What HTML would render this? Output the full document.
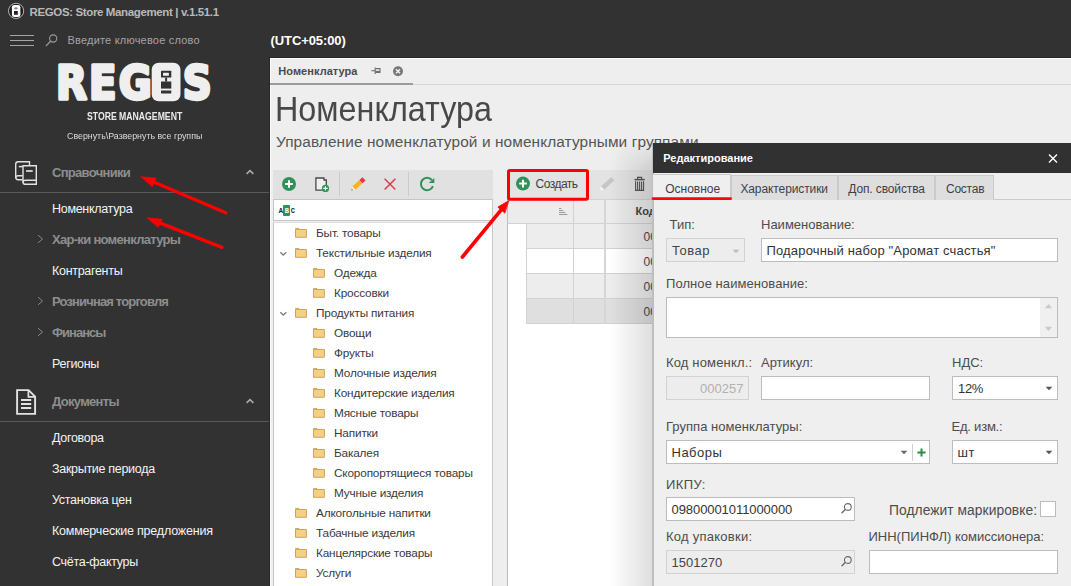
<!DOCTYPE html>
<html lang="ru">
<head>
<meta charset="utf-8">
<title>REGOS: Store Management</title>
<style>
*{box-sizing:border-box;margin:0;padding:0}
html,body{width:1071px;height:586px;overflow:hidden;background:#323232}
body{position:relative;font-family:"Liberation Sans",sans-serif;font-size:12px;color:#333}
.abs{position:absolute;white-space:nowrap}
.t{position:absolute;white-space:nowrap;transform-origin:0 50%;line-height:1}
/* sidebar */
#side{position:absolute;left:0;top:0;width:270px;height:586px;background:#323232}
.mi{position:absolute;left:52px;white-space:nowrap;font-size:12.5px;color:#f4f4f4;line-height:16px;letter-spacing:-.3px}
.mg{position:absolute;left:52px;white-space:nowrap;font-size:13px;font-weight:bold;color:#8e8e8e;line-height:16px;letter-spacing:-.7px}
.sep{position:absolute;left:0;width:270px;height:1px;background:#5a5a5a}
/* main */
#main{position:absolute;left:269px;top:57px;width:802px;height:529px;background:#eeeeee;border-left:1px solid #272727;border-top:1px solid #272727;box-shadow:inset 1px 1px 0 #fbfbfb}
/* tree */
.tr{position:absolute;white-space:nowrap;font-size:11.8px;color:#3a3a3a;line-height:14px;letter-spacing:-.17px}
.fold{position:absolute;width:13px;height:11px}
/* dialog */
#dlg{position:absolute;left:652px;top:143px;width:419px;height:443px;background:#efefef;border-left:2px solid #bebebe}
.lb{position:absolute;white-space:nowrap;font-size:13px;color:#4c4c4c;line-height:16px}
.in{position:absolute;background:#fff;border:1px solid #bcbcbc;font-size:13px;color:#333;line-height:24px;white-space:nowrap;overflow:hidden}
.dis{background:#ededed;border-color:#d2d2d2}
.tab{position:absolute;top:175px;height:25px;background:#dedede;border:1px solid #cacaca;border-bottom:none;font-size:12px;color:#3c3c3c;line-height:24px;text-align:center;white-space:nowrap}
</style>
</head>
<body>
<div id="side">
<!-- title bar -->
<svg class="abs" style="left:7px;top:2px" width="19" height="19" viewBox="0 0 19 19">
<circle cx="9.1" cy="8.9" r="7.6" fill="#1b1b1b" stroke="#c4c4c4" stroke-width=".9"/>
<rect x="4.9" y="2.9" width="8.5" height="12.2" rx="2.4" fill="#fdfdfd"/>
<ellipse cx="8.9" cy="6.4" rx="1.9" ry="1.15" fill="#8a8a8a"/>
<rect x="7" y="9" width="3.8" height="3.9" rx=".6" fill="#1a1a1a"/>
<rect x="7" y="11.6" width="3.8" height="1.5" rx=".5" fill="#6a6a6a" opacity=".6"/>
</svg>
<div class="t" style="left:29.5px;top:7px;font-size:11.5px;font-weight:bold;color:#b9b9b9;letter-spacing:-.37px">REGOS: Store Management | v.1.51.1</div>
<!-- hamburger + search -->
<div class="abs" style="left:10px;top:35px;width:24px;height:1px;background:#a5a5a5"></div>
<div class="abs" style="left:10px;top:40px;width:24px;height:1px;background:#a5a5a5"></div>
<div class="abs" style="left:10px;top:45px;width:24px;height:1px;background:#a5a5a5"></div>
<svg class="abs" style="left:44px;top:32px" width="16" height="16" viewBox="0 0 16 16">
<circle cx="9.2" cy="6.5" r="3.6" fill="none" stroke="#9c9c9c" stroke-width="1.1"/>
<path d="M6.6 9.2 L2.3 13.6" stroke="#9c9c9c" stroke-width="1.3" stroke-linecap="round"/>
</svg>
<div class="t" style="left:67.5px;top:35px;font-size:11px;color:#a4a4a4;letter-spacing:.2px">Введите ключевое слово</div>
<!-- logo -->
<svg class="abs" style="left:50px;top:56px" width="170" height="52" viewBox="50 56 170 52">
<text transform="scale(0.855,1)" y="99" x="65.5 104.1 138.9 183.2 213.9" font-family="'DejaVu Sans','Liberation Sans',sans-serif" font-weight="bold" font-size="47" fill="#efefef" stroke="#efefef" stroke-width="3.4" stroke-linejoin="round">REG<tspan font-size="30" stroke-width="0">O</tspan>S</text>
<rect x="151.7" y="62.8" width="28.8" height="38.4" rx="7" fill="#efefef"/>
<rect x="161" y="70.7" width="10.3" height="6.9" rx=".6" fill="#323232"/>
<rect x="163" y="72.7" width="5.9" height="3.1" rx=".5" fill="#efefef"/>
<rect x="165.1" y="77.6" width="2" height="4" fill="#323232"/>
<rect x="161" y="81.5" width="10.3" height="7.1" fill="#323232"/>
<rect x="161" y="90.4" width="10.3" height="3.1" rx=".4" fill="#323232"/>
</svg>
<div class="t" style="left:86.7px;top:111.5px;font-size:10px;font-weight:bold;color:#ececec;transform:scaleX(.867)">STORE MANAGEMENT</div>
<div class="t" style="left:67px;top:132px;font-size:9px;color:#dcdcdc;transform:scaleX(.982)">Свернуть\Развернуть все группы</div>
<!-- group 1 -->
<svg class="abs" style="left:13px;top:158px" width="28" height="30" viewBox="0 0 28 30">
<g fill="none" stroke="#e2e2e2" stroke-width="1.4">
<path d="M16.5 7.4 V3.8 H5.2 Q2.7 3.8 2.7 6.3 V19.3 Q2.7 21.7 5.2 21.7 H9.6"/>
<path d="M2.7 19.8 Q2.7 17.7 5.2 17.7 H9.6"/>
<path d="M5.8 8.6 H9.6" stroke-width="1.5"/>
<path d="M23.3 7.7 H10 V23.9 Q10 26.3 12.5 26.3 H23.3 Z"/>
<path d="M10 24.4 Q10 22.3 12.5 22.3 H23.3"/>
<path d="M13.1 13 H19.7" stroke-width="1.7"/>
</g>
</svg>
<div class="mg" style="top:165px">Справочники</div>
<svg class="abs" style="left:244px;top:168px" width="12" height="8" viewBox="0 0 12 8"><path d="M2.6 5.9 L6 2.6 L9.4 5.9" fill="none" stroke="#a8a8a8" stroke-width="1.7"/></svg>
<div class="sep" style="top:192px"></div>
<div class="mi" style="top:201px">Номенклатура</div>
<svg class="abs" style="left:36px;top:234px" width="9" height="10" viewBox="0 0 9 10"><path d="M2.1 1.2 L6.5 5 L2.1 8.8" fill="none" stroke="#8e8e8e" stroke-width=".95"/></svg>
<div class="mg" style="top:232px">Хар-ки номенклатуры</div>
<div class="mi" style="top:263px">Контрагенты</div>
<svg class="abs" style="left:36px;top:296px" width="9" height="10" viewBox="0 0 9 10"><path d="M2.1 1.2 L6.5 5 L2.1 8.8" fill="none" stroke="#8e8e8e" stroke-width=".95"/></svg>
<div class="mg" style="top:294px;letter-spacing:-.84px">Розничная торговля</div>
<svg class="abs" style="left:36px;top:327px" width="9" height="10" viewBox="0 0 9 10"><path d="M2.1 1.2 L6.5 5 L2.1 8.8" fill="none" stroke="#8e8e8e" stroke-width=".95"/></svg>
<div class="mg" style="top:325px;letter-spacing:-1px">Финансы</div>
<div class="mi" style="top:356px">Регионы</div>
<!-- group 2 -->
<svg class="abs" style="left:13px;top:386px" width="28" height="30" viewBox="0 0 28 30">
<g fill="none" stroke="#e2e2e2" stroke-width="1.9" stroke-linejoin="miter">
<path d="M4.1 4.1 H15.6 L22.1 10.6 V27.9 H4.1 Z"/>
<path d="M15.4 4.4 V10.8 H21.8" stroke-width="1.7"/>
<path d="M8 14 H18.2 M8 18 H18.2 M8 22 H18.2" stroke-width="1.9"/>
</g>
</svg>
<div class="mg" style="top:394px">Документы</div>
<svg class="abs" style="left:244px;top:397px" width="12" height="8" viewBox="0 0 12 8"><path d="M2.6 5.9 L6 2.6 L9.4 5.9" fill="none" stroke="#a8a8a8" stroke-width="1.7"/></svg>
<div class="sep" style="top:421px"></div>
<div class="mi" style="top:430px">Договора</div>
<div class="mi" style="top:461px">Закрытие периода</div>
<div class="mi" style="top:492px">Установка цен</div>
<div class="mi" style="top:523px;letter-spacing:-.2px">Коммерческие предложения</div>
<div class="mi" style="top:554px">Счёта-фактуры</div>
</div>
<div id="main"></div>
<div class="t" style="left:270.6px;top:33.5px;font-size:13px;font-weight:bold;color:#fff;letter-spacing:-.1px">(UTC+05:00)</div>
<!-- tab strip -->
<div class="abs" style="left:270px;top:84px;width:801px;height:1px;background:#d6d6d6"></div>
<div class="abs" style="left:270px;top:83px;width:143px;height:2px;background:#9c9c9c"></div>
<div class="t" style="left:278.3px;top:66px;font-size:11px;font-weight:bold;color:#4a4a4a;letter-spacing:.05px">Номенклатура</div>
<svg class="abs" style="left:370px;top:66px" width="12" height="10" viewBox="0 0 12 10"><g stroke="#6e6e6e" fill="none" stroke-width="1.1"><path d="M1.3 4.7 H5"/><path d="M5.2 1.6 V8"/><path d="M5.2 2.6 H10 V6.4 H5.2" /><path d="M5.4 5.7 H10" stroke-width="1.6"/></g></svg>
<svg class="abs" style="left:392px;top:65px" width="12" height="12" viewBox="0 0 12 12"><circle cx="6" cy="6.2" r="5" fill="#777"/><path d="M4 4.2 L8 8.2 M8 4.2 L4 8.2" stroke="#f2f2f2" stroke-width="1.5"/></svg>
<!-- heading -->
<div class="t" style="left:275px;top:91.2px;font-size:35px;color:#484848;transform:scaleX(.924)">Номенклатура</div>
<div class="t" style="left:276px;top:133.6px;font-size:15.4px;color:#555;letter-spacing:.1px">Управление номенклатурой и номенклатурными группами</div>
<!-- tree toolbar -->
<div class="abs" style="left:273px;top:170px;width:220px;height:29px;background:#e1e1e1"></div>
<svg class="abs" style="left:281px;top:176px" width="16" height="16" viewBox="0 0 16 16"><circle cx="8" cy="8" r="7" fill="#2f9258"/><path d="M8 4.2 V11.8 M4.2 8 H11.8" stroke="#fff" stroke-width="2"/></svg>
<svg class="abs" style="left:313px;top:175px" width="18" height="18" viewBox="0 0 18 18"><path d="M2.9 3 H11 V5 H13.3 V15.1 H2.9 Z" fill="#f0f0f0" stroke="#484848" stroke-width="1.3"/><circle cx="12.5" cy="13.4" r="3.6" fill="#2f9258"/><path d="M12.5 11.2 V15.6 M10.3 13.4 H14.7" stroke="#fff" stroke-width="1.2"/></svg>
<div class="abs" style="left:339px;top:172px;width:1px;height:24px;background:#cacaca"></div>
<svg class="abs" style="left:349px;top:176px" width="18" height="16" viewBox="0 0 18 16"><path d="M6.33 13.77 L13.44 7.29 L10.40 3.96 L3.30 10.44 Z" fill="#fbb117"/><path d="M13.44 7.29 L16.55 4.46 L13.51 1.13 L10.40 3.96 Z" fill="#e8364a"/><path d="M2.30 14.40 L6.33 13.77 L3.30 10.44 Z" fill="#f7f3ea"/><path d="M2.30 14.40 L4.08 14.12 L2.74 12.65 Z" fill="#555"/></svg>
<svg class="abs" style="left:383px;top:177px" width="14" height="14" viewBox="0 0 14 14"><path d="M1.6 1.8 L12.4 12.6 M12.4 1.8 L1.6 12.6" stroke="#dc3545" stroke-width="1.35"/></svg>
<div class="abs" style="left:408px;top:172px;width:1px;height:24px;background:#cacaca"></div>
<svg class="abs" style="left:419px;top:176px" width="17" height="16" viewBox="0 0 17 16"><path d="M12.85 4 A6.2 6.2 0 1 0 13.93 10.12" fill="none" stroke="#2f9258" stroke-width="2"/><path d="M15.3 2 V7.1 H9.8 Z" fill="#2f9258"/></svg>
<!-- tree search -->
<div class="abs" style="left:273px;top:199px;width:220px;height:22px;background:#fff;border:1px solid #c6c6c6"></div>
<div class="abs" style="left:283px;top:205px;width:7px;height:11px;background:#2f9258;border-radius:1px"></div>
<div class="t" style="left:278.7px;top:208px;font-size:7px;color:#222;letter-spacing:1.8px;font-weight:bold;font-family:'Liberation Mono','Liberation Sans',monospace">A<span style="color:#fff">B</span>C</div>
<!-- tree -->
<div class="abs" style="left:273px;top:222px;width:220px;height:366px;background:#fff;border:1px solid #c6c6c6;border-top-color:#dcdcdc"></div>
<svg class="fold" style="left:295px;top:228px" viewBox="0 0 13 11"><path d="M.5 .6 H4 V1.5 H11.4 V9.3 H.5 Z" fill="#f4cf85" stroke="#cda65e" stroke-width="1"/><path d="M.5 1.5 H4.4" stroke="#cda65e" stroke-width=".9"/></svg><div class="tr" style="left:316px;top:226px">Быт. товары</div>
<svg class="abs" style="left:279px;top:250px" width="9" height="7" viewBox="0 0 9 7"><path d="M1.3 2.3 L4.3 5.1 L7.3 2.3" fill="none" stroke="#808080" stroke-width="1.4"/></svg>
<svg class="fold" style="left:295px;top:248px" viewBox="0 0 13 11"><path d="M.5 .6 H4 V1.5 H11.4 V9.3 H.5 Z" fill="#f4cf85" stroke="#cda65e" stroke-width="1"/><path d="M.5 1.5 H4.4" stroke="#cda65e" stroke-width=".9"/></svg><div class="tr" style="left:316px;top:246px">Текстильные изделия</div>
<svg class="fold" style="left:313px;top:268px" viewBox="0 0 13 11"><path d="M.5 .6 H4 V1.5 H11.4 V9.3 H.5 Z" fill="#f4cf85" stroke="#cda65e" stroke-width="1"/><path d="M.5 1.5 H4.4" stroke="#cda65e" stroke-width=".9"/></svg><div class="tr" style="left:334px;top:266px">Одежда</div>
<svg class="fold" style="left:313px;top:288px" viewBox="0 0 13 11"><path d="M.5 .6 H4 V1.5 H11.4 V9.3 H.5 Z" fill="#f4cf85" stroke="#cda65e" stroke-width="1"/><path d="M.5 1.5 H4.4" stroke="#cda65e" stroke-width=".9"/></svg><div class="tr" style="left:334px;top:286px">Кроссовки</div>
<svg class="abs" style="left:279px;top:310px" width="9" height="7" viewBox="0 0 9 7"><path d="M1.3 2.3 L4.3 5.1 L7.3 2.3" fill="none" stroke="#808080" stroke-width="1.4"/></svg>
<svg class="fold" style="left:295px;top:308px" viewBox="0 0 13 11"><path d="M.5 .6 H4 V1.5 H11.4 V9.3 H.5 Z" fill="#f4cf85" stroke="#cda65e" stroke-width="1"/><path d="M.5 1.5 H4.4" stroke="#cda65e" stroke-width=".9"/></svg><div class="tr" style="left:316px;top:306px">Продукты питания</div>
<svg class="fold" style="left:313px;top:328px" viewBox="0 0 13 11"><path d="M.5 .6 H4 V1.5 H11.4 V9.3 H.5 Z" fill="#f4cf85" stroke="#cda65e" stroke-width="1"/><path d="M.5 1.5 H4.4" stroke="#cda65e" stroke-width=".9"/></svg><div class="tr" style="left:334px;top:326px">Овощи</div>
<svg class="fold" style="left:313px;top:348px" viewBox="0 0 13 11"><path d="M.5 .6 H4 V1.5 H11.4 V9.3 H.5 Z" fill="#f4cf85" stroke="#cda65e" stroke-width="1"/><path d="M.5 1.5 H4.4" stroke="#cda65e" stroke-width=".9"/></svg><div class="tr" style="left:334px;top:346px">Фрукты</div>
<svg class="fold" style="left:313px;top:368px" viewBox="0 0 13 11"><path d="M.5 .6 H4 V1.5 H11.4 V9.3 H.5 Z" fill="#f4cf85" stroke="#cda65e" stroke-width="1"/><path d="M.5 1.5 H4.4" stroke="#cda65e" stroke-width=".9"/></svg><div class="tr" style="left:334px;top:366px">Молочные изделия</div>
<svg class="fold" style="left:313px;top:388px" viewBox="0 0 13 11"><path d="M.5 .6 H4 V1.5 H11.4 V9.3 H.5 Z" fill="#f4cf85" stroke="#cda65e" stroke-width="1"/><path d="M.5 1.5 H4.4" stroke="#cda65e" stroke-width=".9"/></svg><div class="tr" style="left:334px;top:386px">Кондитерские изделия</div>
<svg class="fold" style="left:313px;top:408px" viewBox="0 0 13 11"><path d="M.5 .6 H4 V1.5 H11.4 V9.3 H.5 Z" fill="#f4cf85" stroke="#cda65e" stroke-width="1"/><path d="M.5 1.5 H4.4" stroke="#cda65e" stroke-width=".9"/></svg><div class="tr" style="left:334px;top:406px">Мясные товары</div>
<svg class="fold" style="left:313px;top:428px" viewBox="0 0 13 11"><path d="M.5 .6 H4 V1.5 H11.4 V9.3 H.5 Z" fill="#f4cf85" stroke="#cda65e" stroke-width="1"/><path d="M.5 1.5 H4.4" stroke="#cda65e" stroke-width=".9"/></svg><div class="tr" style="left:334px;top:426px">Напитки</div>
<svg class="fold" style="left:313px;top:448px" viewBox="0 0 13 11"><path d="M.5 .6 H4 V1.5 H11.4 V9.3 H.5 Z" fill="#f4cf85" stroke="#cda65e" stroke-width="1"/><path d="M.5 1.5 H4.4" stroke="#cda65e" stroke-width=".9"/></svg><div class="tr" style="left:334px;top:446px">Бакалея</div>
<svg class="fold" style="left:313px;top:468px" viewBox="0 0 13 11"><path d="M.5 .6 H4 V1.5 H11.4 V9.3 H.5 Z" fill="#f4cf85" stroke="#cda65e" stroke-width="1"/><path d="M.5 1.5 H4.4" stroke="#cda65e" stroke-width=".9"/></svg><div class="tr" style="left:334px;top:466px">Скоропортящиеся товары</div>
<svg class="fold" style="left:313px;top:488px" viewBox="0 0 13 11"><path d="M.5 .6 H4 V1.5 H11.4 V9.3 H.5 Z" fill="#f4cf85" stroke="#cda65e" stroke-width="1"/><path d="M.5 1.5 H4.4" stroke="#cda65e" stroke-width=".9"/></svg><div class="tr" style="left:334px;top:486px">Мучные изделия</div>
<svg class="fold" style="left:295px;top:508px" viewBox="0 0 13 11"><path d="M.5 .6 H4 V1.5 H11.4 V9.3 H.5 Z" fill="#f4cf85" stroke="#cda65e" stroke-width="1"/><path d="M.5 1.5 H4.4" stroke="#cda65e" stroke-width=".9"/></svg><div class="tr" style="left:316px;top:506px">Алкогольные напитки</div>
<svg class="fold" style="left:295px;top:528px" viewBox="0 0 13 11"><path d="M.5 .6 H4 V1.5 H11.4 V9.3 H.5 Z" fill="#f4cf85" stroke="#cda65e" stroke-width="1"/><path d="M.5 1.5 H4.4" stroke="#cda65e" stroke-width=".9"/></svg><div class="tr" style="left:316px;top:526px">Табачные изделия</div>
<svg class="fold" style="left:295px;top:548px" viewBox="0 0 13 11"><path d="M.5 .6 H4 V1.5 H11.4 V9.3 H.5 Z" fill="#f4cf85" stroke="#cda65e" stroke-width="1"/><path d="M.5 1.5 H4.4" stroke="#cda65e" stroke-width=".9"/></svg><div class="tr" style="left:316px;top:546px">Канцелярские товары</div>
<svg class="fold" style="left:295px;top:568px" viewBox="0 0 13 11"><path d="M.5 .6 H4 V1.5 H11.4 V9.3 H.5 Z" fill="#f4cf85" stroke="#cda65e" stroke-width="1"/><path d="M.5 1.5 H4.4" stroke="#cda65e" stroke-width=".9"/></svg><div class="tr" style="left:316px;top:566px">Услуги</div>

<!-- grid toolbar -->
<div class="abs" style="left:508px;top:170px;width:145px;height:29px;background:#e3e3e3"></div>
<svg class="abs" style="left:515px;top:176px" width="16" height="16" viewBox="0 0 16 16"><circle cx="8" cy="7.6" r="7" fill="#2f9258"/><path d="M8 3.8 V11.4 M4.2 7.6 H11.8" stroke="#fff" stroke-width="2"/></svg>
<div class="t" style="left:535.5px;top:178px;font-size:12px;color:#3d3d4a;letter-spacing:-.5px">Создать</div>
<svg class="abs" style="left:598px;top:176px" width="18" height="16" viewBox="0 0 18 16"><path d="M6.13 13.67 L16.35 4.36 L13.31 1.03 L3.10 10.34 Z" fill="#c6c6c6"/><path d="M2.10 14.30 L6.13 13.67 L3.10 10.34 Z" fill="#f4f4f4"/></svg>
<svg class="abs" style="left:633px;top:176px" width="14" height="16" viewBox="0 0 14 16"><g fill="none" stroke="#555" stroke-width="1.1"><path d="M1.5 3.6 H11.7" stroke-width="1.5"/><path d="M4.6 3 V1.4 H8.6 V3"/><path d="M2.6 5.2 V14.4 H10.6 V5.2"/><path d="M4.6 5.4 V14 M6.6 5.4 V14 M8.6 5.4 V14"/></g></svg>
<!-- grid -->
<div class="abs" style="left:507px;top:199px;width:146px;height:388px;background:#fff;border-left:1px solid #bdbdbd"></div>
<div class="abs" style="left:507px;top:199px;width:146px;height:25px;background:#ececec;border:1px solid #d2d2d2;border-right:none;border-left-color:#bdbdbd"></div>
<div class="abs" style="left:573px;top:199px;width:1px;height:125px;background:#d2d2d2"></div>
<div class="abs" style="left:604px;top:199px;width:2px;height:125px;background:#d6d6d6"></div>
<div class="abs" style="left:526px;top:224px;width:127px;height:25px;background:#ededed;border-bottom:1px solid #d2d2d2"></div>
<div class="abs" style="left:526px;top:249px;width:127px;height:25px;background:#fff;border-bottom:1px solid #d2d2d2"></div>
<div class="abs" style="left:526px;top:274px;width:127px;height:25px;background:#ededed;border-bottom:1px solid #d2d2d2"></div>
<div class="abs" style="left:526px;top:299px;width:127px;height:25px;background:#dfdfdf;border-bottom:1px solid #d2d2d2"></div>
<div class="abs" style="left:526px;top:224px;width:1px;height:100px;background:#d2d2d2"></div>
<div class="abs" style="left:573px;top:199px;width:1px;height:125px;background:#d2d2d2"></div>
<div class="abs" style="left:604px;top:199px;width:2px;height:125px;background:#d6d6d6"></div>
<svg class="abs" style="left:558px;top:207px" width="10" height="9" viewBox="0 0 10 9"><path d="M1 1.5 H3.4 M1 3.5 H5.4 M1 5.5 H7.4 M1 7.5 H9.4" stroke="#9a9a9a" stroke-width="1"/></svg>
<div class="abs" style="left:605px;top:199px;width:48px;height:125px;overflow:hidden">
<div class="t" style="left:30.5px;top:7px;font-size:11px;font-weight:bold;color:#444">Код</div>
<div class="t" style="left:38.5px;top:32px;font-size:12px;color:#4a4a4a">000253</div>
<div class="t" style="left:38.5px;top:57px;font-size:12px;color:#4a4a4a">000254</div>
<div class="t" style="left:38.5px;top:82px;font-size:12px;color:#4a4a4a">000255</div>
<div class="t" style="left:38.5px;top:107px;font-size:12px;color:#4a4a4a">000256</div>
</div>
<!-- dialog shadow -->
<div class="abs" style="left:610px;top:138px;width:42px;height:448px;background:linear-gradient(to right,rgba(0,0,0,0),rgba(0,0,0,.125));-webkit-mask-image:linear-gradient(to bottom,transparent,#000 30px);mask-image:linear-gradient(to bottom,transparent,#000 30px)"></div>
<!-- red annotations -->
<svg class="abs" style="left:0;top:0;z-index:10" width="1071" height="586" viewBox="0 0 1071 586">
<rect x="508.5" y="170.5" width="79" height="28.8" rx="1.2" fill="none" stroke="#ff0000" stroke-width="3"/>
<path d="M653 198.55 H730.6" stroke="#fa0510" stroke-width="2.7" stroke-linecap="round"/>
<g stroke="#ff0000" stroke-linecap="round" fill="#ff0000" stroke-linejoin="round">
<path d="M225.8 212.8 L153 181.8" stroke-width="3.4"/><path d="M141.3 176.8 L156 178.2 L152.4 186.4 Z" stroke-width=".8"/>
<path d="M221.9 247.4 L159 222.6" stroke-width="3.4"/><path d="M147.5 217.9 L162.2 219.3 L158.3 227 Z" stroke-width=".8"/>
<path d="M462.4 257 L502 208.8" stroke-width="3.6"/><path d="M508.6 200.8 L497.9 207.1 L504.6 212.9 Z" stroke-width=".8"/>
</g>
</svg>

<div id="dlg"></div>
<div class="abs" style="left:653px;top:143px;width:418px;height:30px;background:#313131"></div>
<div class="t" style="left:663.3px;top:153px;font-size:11px;font-weight:bold;color:#fff">Редактирование</div>
<svg class="abs" style="left:1046px;top:152px" width="14" height="13" viewBox="0 0 14 13"><path d="M3 2.6 L11 10.4 M11 2.6 L3 10.4" stroke="#fff" stroke-width="1.4"/></svg>
<!-- tabs -->
<div class="abs" style="left:653px;top:199px;width:418px;height:1px;background:#cbcbcb"></div>
<div class="tab" style="left:653px;top:174px;width:78px;height:26px;background:#efefef;border-left:none">&nbsp;</div>
<div class="t" style="left:665.2px;top:183px;font-size:12px;color:#3e3e48;letter-spacing:0">Основное</div>

<div class="tab" style="left:731px;width:107px">&nbsp;</div>
<div class="t" style="left:740.4px;top:183px;font-size:12px;color:#3e3e48;letter-spacing:-.1px">Характеристики</div>
<div class="tab" style="left:838px;width:97px">&nbsp;</div>
<div class="t" style="left:848.3px;top:183px;font-size:12px;color:#3e3e48;letter-spacing:-.12px">Доп. свойства</div>
<div class="tab" style="left:935px;width:59px">&nbsp;</div>
<div class="t" style="left:946px;top:183px;font-size:12px;color:#3e3e48;letter-spacing:-.25px">Состав</div>
<!-- row 1 -->
<div class="lb" style="left:669.6px;top:216.5px">Тип:</div>
<div class="lb" style="left:761px;top:216.5px">Наименование:</div>
<div class="in dis" style="left:666px;top:238px;width:79px;height:24px;padding-left:5px;color:#444;letter-spacing:.5px">Товар</div>
<svg class="abs" style="left:732px;top:248.5px" width="8" height="5" viewBox="0 0 8 5"><path d="M.6 .8 H7.4 L4 4.2 Z" fill="#bdbdbd"/></svg>
<div class="in" style="left:761px;top:238px;width:297px;height:24px;padding-left:4.5px;letter-spacing:.16px">Подарочный набор "Аромат счастья"</div>
<!-- row 2 -->
<div class="lb" style="left:666px;top:276px;letter-spacing:.07px">Полное наименование:</div>
<div class="in" style="left:666px;top:297px;width:392px;height:41px"></div>
<div class="abs" style="left:1040px;top:298px;width:17px;height:39px;background:#f0f0f0"></div>
<svg class="abs" style="left:1044px;top:303px" width="9" height="6" viewBox="0 0 9 6"><path d="M.8 5.2 H8.2 L4.5 .9 Z" fill="#cacaca"/></svg>
<svg class="abs" style="left:1044px;top:326px" width="9" height="6" viewBox="0 0 9 6"><path d="M.8 .8 H8.2 L4.5 5.1 Z" fill="#cacaca"/></svg>
<!-- row 3 -->
<div class="lb" style="left:666px;top:354.5px;letter-spacing:.16px">Код номенкл.:</div>
<div class="lb" style="left:761px;top:354.5px">Артикул:</div>
<div class="lb" style="left:952px;top:354.5px">НДС:</div>
<div class="in dis" style="left:666px;top:376px;width:83px;height:24px;padding-right:4.5px;text-align:right;color:#b1b1b1">000257</div>
<div class="in" style="left:761px;top:376px;width:169px;height:24px"></div>
<div class="in" style="left:952px;top:376px;width:106px;height:24px;padding-left:5px;letter-spacing:-.3px">12%</div>
<svg class="abs" style="left:1045px;top:386px" width="8" height="5" viewBox="0 0 8 5"><path d="M.6 .8 H7.4 L4 4.2 Z" fill="#555"/></svg>
<!-- row 4 -->
<div class="lb" style="left:666px;top:419px;letter-spacing:.04px">Группа номенклатуры:</div>
<div class="lb" style="left:951.5px;top:419px;letter-spacing:-.22px">Ед. изм.:</div>
<div class="in" style="left:666px;top:440px;width:264px;height:24px;padding-left:4.5px;letter-spacing:.5px">Наборы</div>
<svg class="abs" style="left:900px;top:450px" width="8" height="5" viewBox="0 0 8 5"><path d="M.6 .8 H7.4 L4 4.2 Z" fill="#666"/></svg>
<div class="abs" style="left:912px;top:444px;width:1px;height:17px;background:#d0d0d0"></div>
<svg class="abs" style="left:916px;top:447px" width="11" height="11" viewBox="0 0 11 11"><path d="M5.5 1.4 V9.6 M1.4 5.5 H9.6" stroke="#2a8c4a" stroke-width="2"/></svg>
<div class="in" style="left:952px;top:440px;width:106px;height:24px;padding-left:4.5px;letter-spacing:.6px">шт</div>
<svg class="abs" style="left:1045px;top:450px" width="8" height="5" viewBox="0 0 8 5"><path d="M.6 .8 H7.4 L4 4.2 Z" fill="#555"/></svg>
<!-- row 5 -->
<div class="lb" style="left:666px;top:477px;letter-spacing:.4px">ИКПУ:</div>
<div class="in" style="left:666px;top:497px;width:189px;height:24px;padding-left:4.5px;letter-spacing:-.07px">09800001011000000</div>
<svg class="abs" style="left:840px;top:502px" width="13" height="13" viewBox="0 0 13 13"><circle cx="7.8" cy="5" r="3.4" fill="none" stroke="#6a6a6a" stroke-width="1.1"/><path d="M5.3 7.5 L2 10.8" stroke="#6a6a6a" stroke-width="1.4" stroke-linecap="round"/></svg>
<div class="lb" style="left:889px;top:503px;font-size:13.8px;letter-spacing:.06px">Подлежит маркировке:</div>
<div class="in" style="left:1040px;top:501px;width:16px;height:16px"></div>
<!-- row 6 -->
<div class="lb" style="left:666px;top:529px;letter-spacing:.25px">Код упаковки:</div>
<div class="lb" style="left:868.5px;top:529px;letter-spacing:0">ИНН(ПИНФЛ) комиссионера:</div>
<div class="in dis" style="left:666px;top:550px;width:189px;height:24px;padding-left:4.5px;color:#444">1501270</div>
<svg class="abs" style="left:840px;top:555px" width="13" height="13" viewBox="0 0 13 13"><circle cx="7.8" cy="5" r="3.4" fill="none" stroke="#6a6a6a" stroke-width="1.1"/><path d="M5.3 7.5 L2 10.8" stroke="#6a6a6a" stroke-width="1.4" stroke-linecap="round"/></svg>
<div class="in" style="left:869px;top:550px;width:189px;height:24px"></div>

</body>
</html>
